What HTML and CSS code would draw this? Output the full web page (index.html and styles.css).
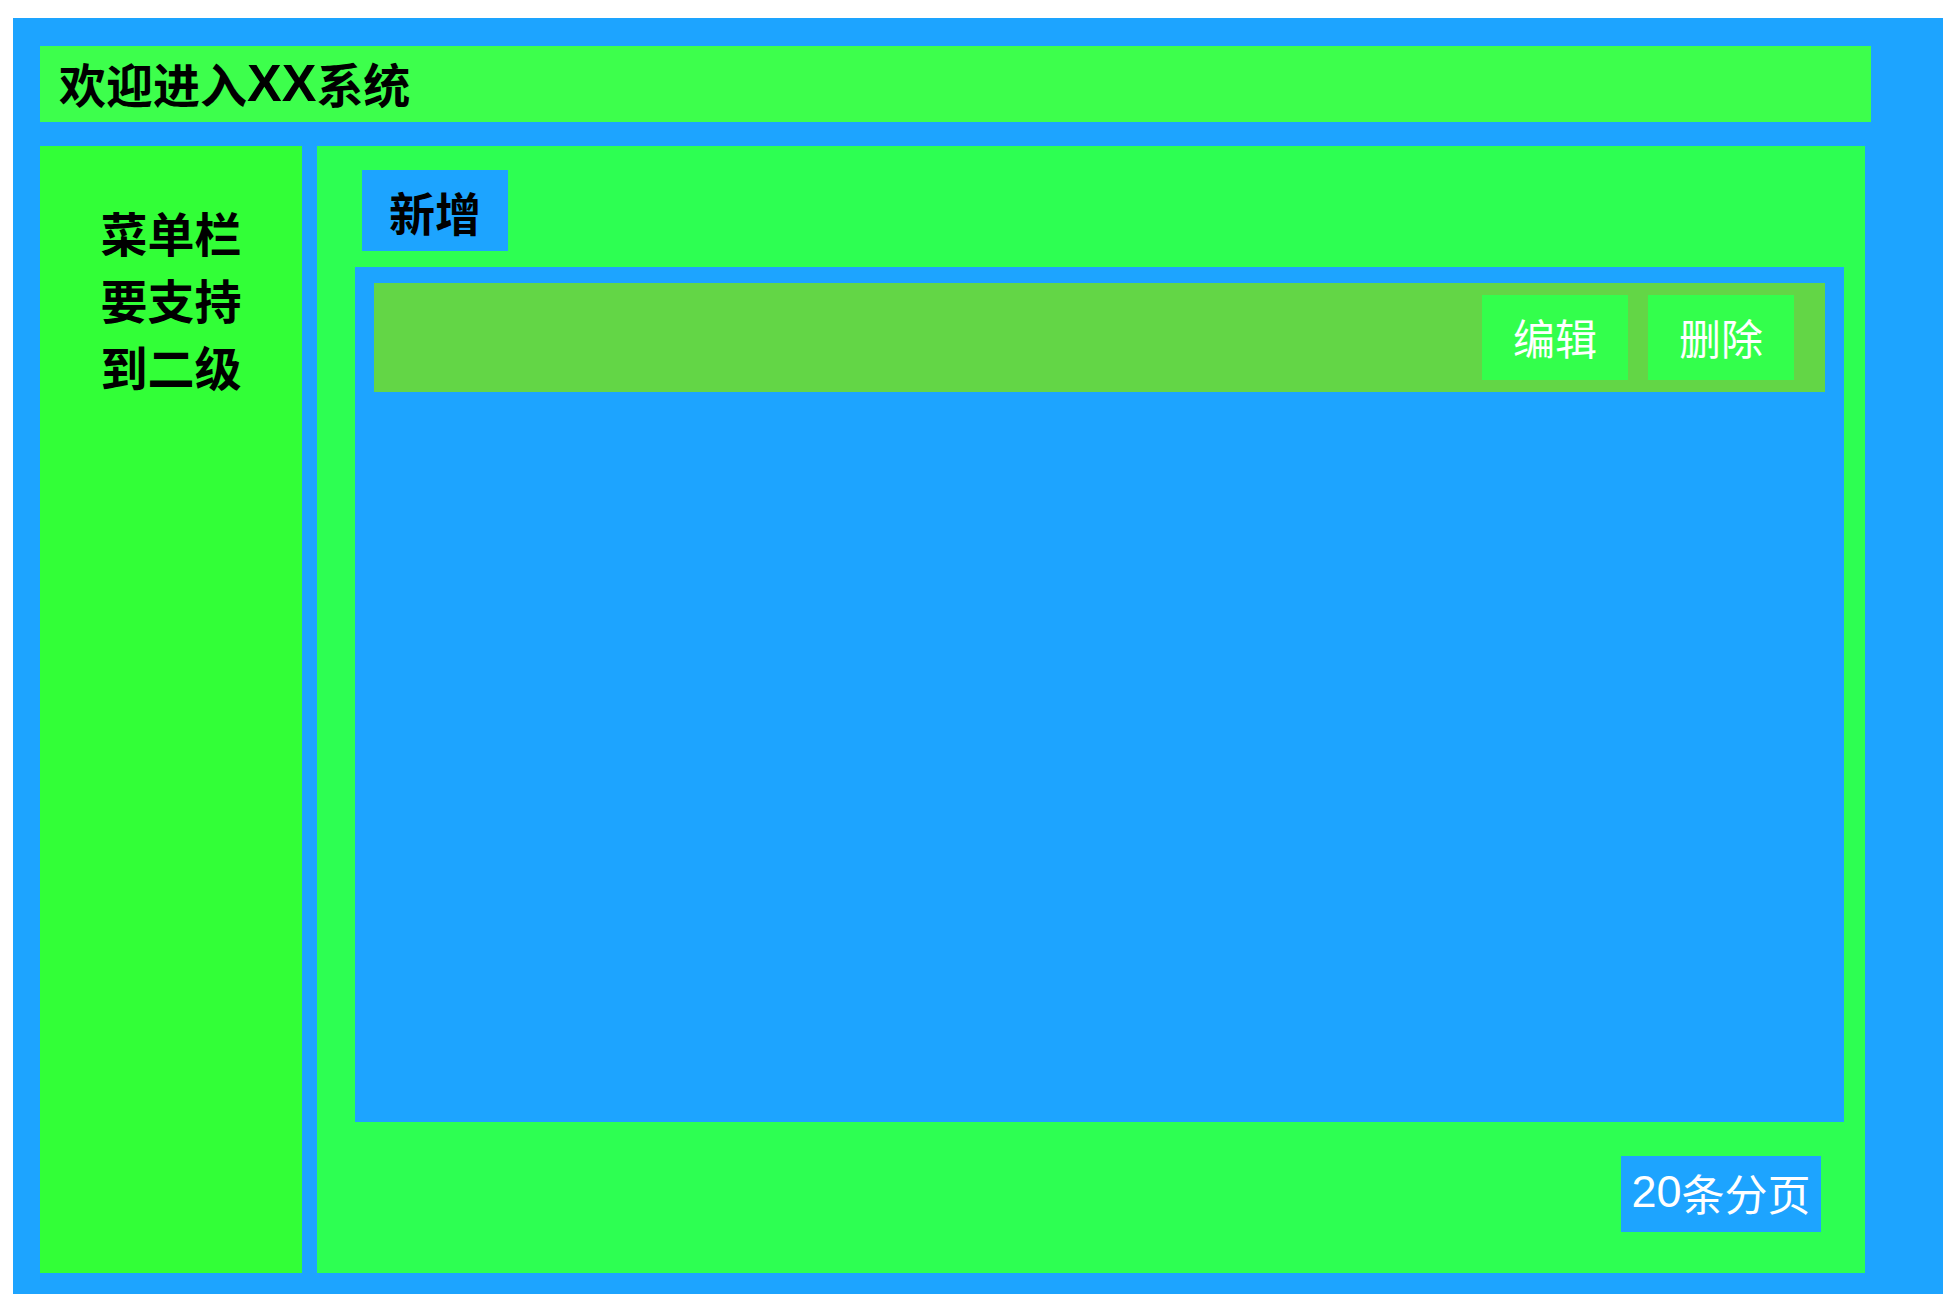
FILE: index.html
```html
<!DOCTYPE html>
<html lang="zh-CN">
<head>
<meta charset="utf-8">
<title>XX系统</title>
<link rel="stylesheet" href="styles.css">
</head>
<body>
<div class="app">
  <header class="header">欢迎进入<span class="header-xx">XX</span>系统</header>
  <div class="body">
    <aside class="sidebar">
      <p class="menu-text">菜单栏要支持到二级</p>
    </aside>
    <main class="main">
      <div class="btn-add">新增</div>
      <div class="table">
        <div class="row">
          <div class="btn-row">编辑</div>
          <div class="btn-row">删除</div>
        </div>
      </div>
      <div class="pager"><span class="pager-num">20</span>条分页</div>
    </main>
  </div>
</div>
</body>
</html>
```
FILE: styles.css
```css
html, body {
  margin: 0;
  padding: 0;
  background: #ffffff;
}
body {
  font-family: "Liberation Sans", "Noto Sans CJK SC", sans-serif;
}
.app {
  margin: 18px 9px 12px 13px;
  height: 1276px;
  box-sizing: border-box;
  padding: 28px 72px 21px 27px;
  background: #1da4ff;
  display: flex;
  flex-direction: column;
}
.header {
  height: 76px;
  box-sizing: border-box;
  flex: none;
  background: #3dff4c;
  display: flex;
  align-items: center;
  padding-left: 19px;
  padding-bottom: 3px;
  font-size: 47px;
  font-weight: 700;
  color: #000;
}
.header-xx {
  font-size: 52px;
  line-height: 1;
}
.body {
  margin-top: 24px;
  height: 1127px;
  display: flex;
  gap: 15px;
}
.sidebar {
  width: 262px;
  flex: none;
  background: #32ff37;
  padding-top: 56px;
  box-sizing: border-box;
}
.menu-text {
  margin: 0 auto;
  width: 3em;
  font-size: 47px;
  line-height: 67px;
  font-weight: 700;
  color: #000;
  text-align: center;
}
.main {
  width: 1548px;
  flex: none;
  background: #2dff52;
  box-sizing: border-box;
  padding: 24px 21px 41px 38px;
  display: flex;
  flex-direction: column;
}
.btn-add {
  align-self: flex-start;
  margin-left: 7px;
  width: 146px;
  height: 81px;
  background: #1da4ff;
  display: flex;
  align-items: center;
  justify-content: center;
  font-size: 46px;
  font-weight: 700;
  color: #000;
}
.table {
  margin-top: 16px;
  flex: 1;
  background: #1da4ff;
  padding: 16px 19px 0 19px;
}
.row {
  height: 109px;
  background: #63d646;
  display: flex;
  justify-content: flex-end;
  align-items: center;
  gap: 20px;
  padding-right: 31px;
}
.btn-row {
  width: 146px;
  height: 85px;
  box-sizing: border-box;
  padding-bottom: 3px;
  background: #33ff4c;
  display: flex;
  align-items: center;
  justify-content: center;
  font-size: 42px;
  color: #fff;
}
.pager {
  align-self: flex-end;
  margin-right: 23px;
  margin-top: 34px;
  width: 200px;
  height: 76px;
  box-sizing: border-box;
  padding-bottom: 5px;
  background: #1da4ff;
  display: flex;
  align-items: center;
  justify-content: center;
  font-size: 43px;
  color: #fff;
  white-space: nowrap;
}
.pager-num {
  font-size: 45px;
  line-height: 1;
}
```
